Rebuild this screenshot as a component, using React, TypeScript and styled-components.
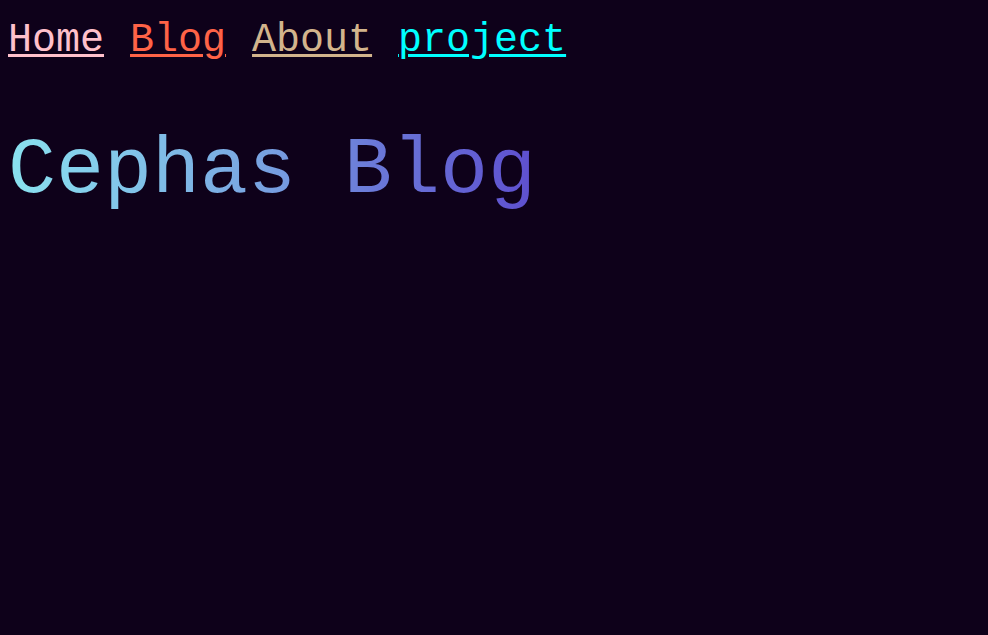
import React from "react";
import styled, { createGlobalStyle } from "styled-components";

const Global = createGlobalStyle`
  html, body {
    margin: 0;
    background: #0e011a;
  }
  body {
    padding: 8px;
    font-family: "Liberation Mono", "DejaVu Sans Mono", monospace;
  }
`;

const Nav = styled.nav`
  display: flex;
  gap: 26px;
  padding-top: 10px;
  font-size: 40px;
  line-height: 45px;
`;

const NavLink = styled.a<{ $color: string }>`
  color: ${(p) => p.$color};
  text-decoration: underline;
  text-decoration-thickness: 3px;
  text-underline-offset: 3px;
`;

const Title = styled.h1`
  margin: 62px 0 0 0;
  font-size: 80px;
  font-weight: 400;
  line-height: 92px;
  display: inline-block;
  background: linear-gradient(to right, #8ae2f0 0%, #7aa8e2 45%, #6a78d8 70%, #5e4fcf 100%);
  -webkit-background-clip: text;
  background-clip: text;
  color: transparent;
`;

export default function App() {
  return (
    <>
      <Global />
      <Nav>
        <NavLink href="#" $color="#ffc0cb">Home</NavLink>
        <NavLink href="#" $color="#ff6347">Blog</NavLink>
        <NavLink href="#" $color="#d2b48c">About</NavLink>
        <NavLink href="#" $color="#00ffff">project</NavLink>
      </Nav>
      <Title>Cephas Blog</Title>
    </>
  );
}
